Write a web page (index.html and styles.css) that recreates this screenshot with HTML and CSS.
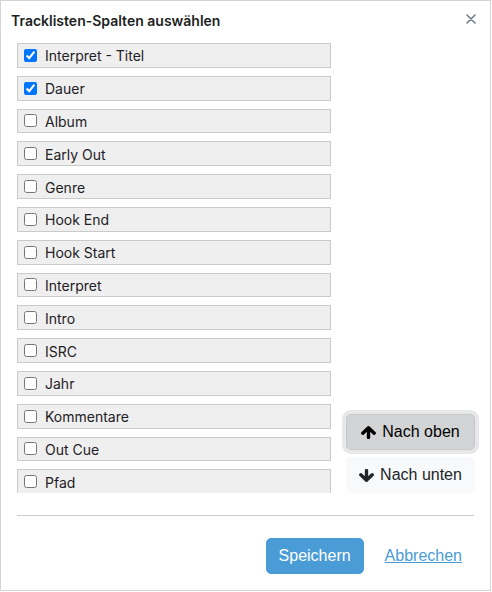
FILE: index.html
```html
<!DOCTYPE html>
<html lang="de">
<head>
<meta charset="utf-8">
<title>Tracklisten-Spalten auswählen</title>
<link rel="stylesheet" href="styles.css">
</head>
<body>
<div class="dialog">
  <div class="header">
    <h1 class="title">Tracklisten-Spalten auswählen</h1>
    <button class="close" aria-label="Schließen">
      <svg width="10" height="10" viewBox="0 0 10 10"><path d="M1 1L9 9M9 1L1 9" stroke="#6f7c8c" stroke-width="1.6" stroke-linecap="round"/></svg>
    </button>
  </div>
  <div class="body">
    <div class="list">
      <label class="item"><input type="checkbox" checked><span>Interpret - Titel</span></label>
      <label class="item"><input type="checkbox" checked><span>Dauer</span></label>
      <label class="item"><input type="checkbox"><span>Album</span></label>
      <label class="item"><input type="checkbox"><span>Early Out</span></label>
      <label class="item"><input type="checkbox"><span>Genre</span></label>
      <label class="item"><input type="checkbox"><span>Hook End</span></label>
      <label class="item"><input type="checkbox"><span>Hook Start</span></label>
      <label class="item"><input type="checkbox"><span>Interpret</span></label>
      <label class="item"><input type="checkbox"><span>Intro</span></label>
      <label class="item"><input type="checkbox"><span>ISRC</span></label>
      <label class="item"><input type="checkbox"><span>Jahr</span></label>
      <label class="item"><input type="checkbox"><span>Kommentare</span></label>
      <label class="item"><input type="checkbox"><span>Out Cue</span></label>
      <label class="item"><input type="checkbox"><span>Pfad</span></label>
    </div>
    <div class="moves">
      <button class="btn btn-move active">
        <svg class="arrow" width="15" height="13" viewBox="0 0 15 13"><path d="M1.8 7.2L7.5 1.8L13.2 7.2M7.5 2.4V11.4" fill="none" stroke="#000" stroke-width="3.4" stroke-linecap="round" stroke-linejoin="round"/></svg>
        <span>Nach oben</span>
      </button>
      <button class="btn btn-move">
        <svg class="arrow" width="15" height="13" viewBox="0 0 15 13"><path d="M1.8 5.8L7.5 11.2L13.2 5.8M7.5 10.6V1.6" fill="none" stroke="#212529" stroke-width="3.4" stroke-linecap="round" stroke-linejoin="round"/></svg>
        <span>Nach unten</span>
      </button>
    </div>
  </div>
  <div class="sep"></div>
  <div class="footer">
    <button class="btn btn-primary">Speichern</button>
    <a class="btn btn-link" href="#">Abbrechen</a>
  </div>
</div>
</body>
</html>
```

FILE: styles.css
```css
html, body {
  margin: 0;
  padding: 0;
  background: #fff;
}

.dialog {
  width: 491px;
  height: 591px;
  box-sizing: border-box;
  border: 1px solid #d4d4d4;
  background: #fff;
  display: flex;
  flex-direction: column;
  font-family: Inter, "Noto Sans", sans-serif;
  color: #212529;
}

.header {
  display: flex;
  justify-content: space-between;
  align-items: flex-start;
  padding: 10px 14px 12px 10px;
}

.title {
  margin: 0;
  font-size: 14px;
  line-height: 20px;
  font-weight: 600;
  color: #1d1f23;
}

.close {
  border: 0;
  background: none;
  padding: 0;
  margin-top: 3px;
  width: 10px;
  height: 10px;
  display: flex;
}

.body {
  display: flex;
  gap: 15px;
  padding: 0 15px 0 16px;
  height: 450px;
}

.list {
  width: 314px;
  flex: none;
  overflow: hidden;
  display: flex;
  flex-direction: column;
  gap: 8px;
}

.item {
  flex: none;
  height: 24.8px;
  box-sizing: border-box;
  background: #efefef;
  border: 1px solid #cacaca;
  display: flex;
  align-items: center;
  gap: 8px;
  padding: 0 6px;
  font-size: 14px;
  color: #1e2125;
}

.item span {
  padding-top: 1px;
}

.item input {
  margin: 0;
  width: 13px;
  height: 13px;
}

.moves {
  flex: 1;
  display: flex;
  flex-direction: column;
  justify-content: flex-end;
  gap: 7px;
}

.btn {
  font-family: "Liberation Sans", Arial, sans-serif;
  font-size: 16px;
  height: 36px;
  box-sizing: border-box;
  border: 1px solid transparent;
  border-radius: 5px;
  padding: 0 12px;
  display: inline-flex;
  align-items: center;
  justify-content: center;
}

.btn-move {
  background: #f8f9fa;
  border-color: #f8f9fa;
  color: #212529;
  gap: 6px;
}

.btn-move.active {
  background: #d3d4d5;
  border-color: #c6c7c8;
  color: #000;
  box-shadow: 0 0 0 4px #e7e8e9;
}

.arrow {
  flex: none;
}

.sep {
  margin: 22px 16px 0 16px;
  border-top: 1px solid #cccccc;
}

.footer {
  display: flex;
  justify-content: flex-end;
  align-items: center;
  gap: 8px;
  padding: 22px 15px 0 16px;
}

.btn-primary {
  background: #4a9cd6;
  border-color: #4a9cd6;
  color: #fff;
  padding: 0 12px;
}

.btn-link {
  color: #4a9cd6;
  text-decoration: underline;
  background: none;
}
```
